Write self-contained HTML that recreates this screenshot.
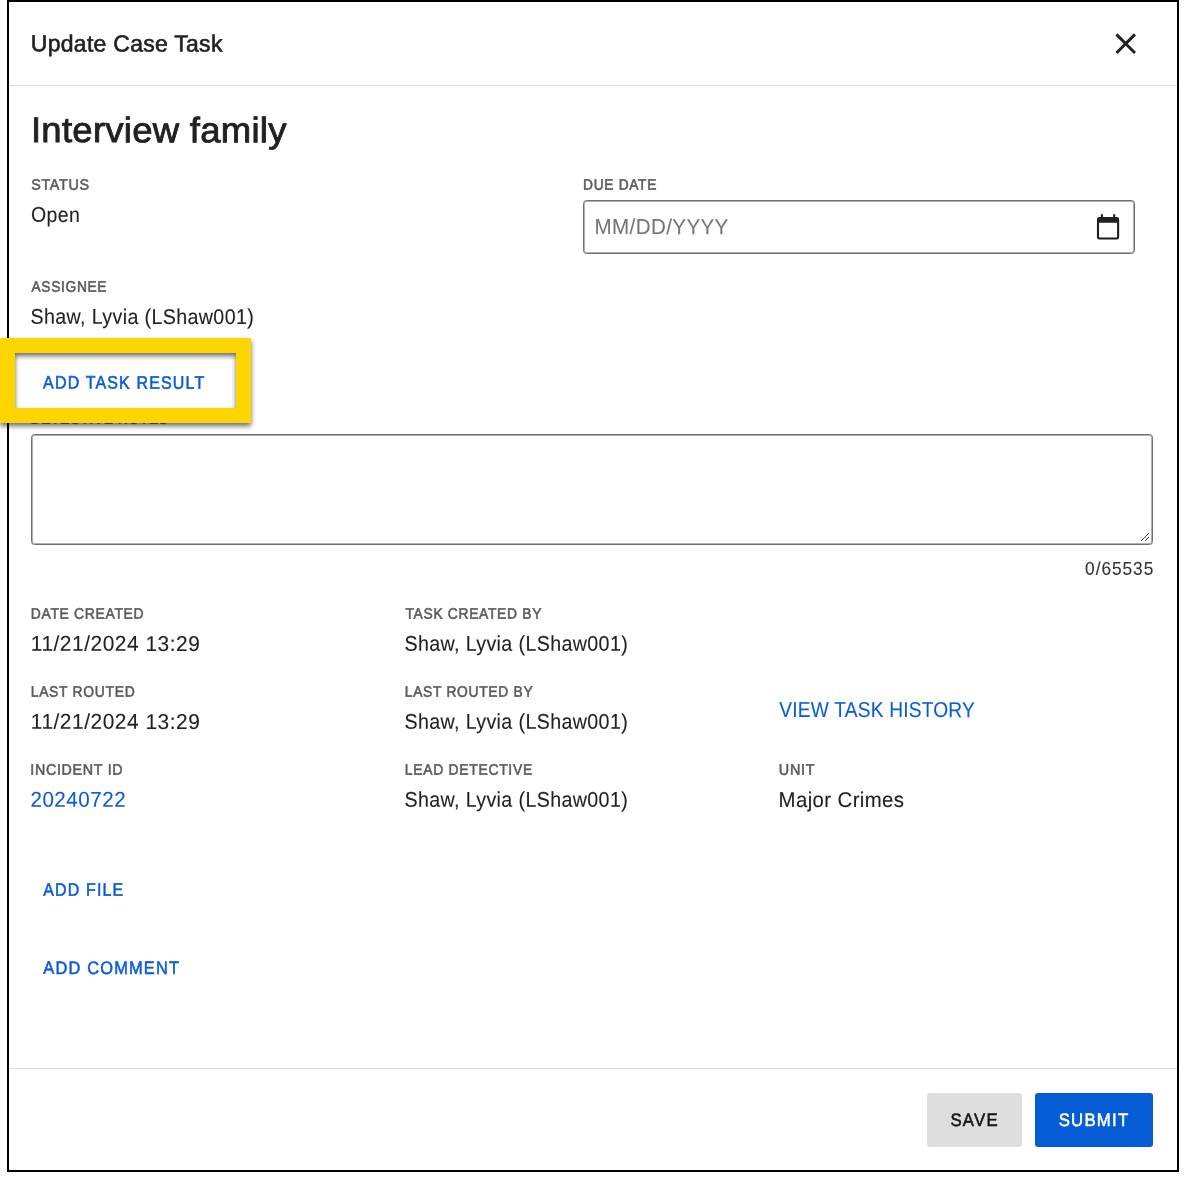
<!DOCTYPE html>
<html lang="en">
<head>
<meta charset="utf-8">
<title>Update Case Task</title>
<style>
*{box-sizing:border-box;margin:0;padding:0}
html,body{width:1191px;height:1192px;background:#fff;overflow:hidden}
body{position:relative;font-family:"Liberation Sans",sans-serif}
.t{position:absolute;left:0;top:0;white-space:nowrap;line-height:0;display:block;font-weight:400;font-style:normal;text-decoration:none;transform-origin:0 0;text-rendering:geometricPrecision}
.abs{position:absolute}
#frame{left:7px;top:0;width:1172px;height:1172px;border:2px solid #000;background:#fff}
.hr{left:9px;width:1168px;height:1px;background:#dcdcdc}
#due{left:583px;top:200px;width:552px;height:54px;border:1px solid #707070;border-radius:3.5px;background:#fff;box-shadow:inset 0 0 0 1px rgba(112,112,112,.55)}
#notes{left:31px;top:434px;width:1122px;height:111px;border:1px solid #707070;border-radius:3.5px;background:#fff;box-shadow:inset 0 0 0 1px rgba(112,112,112,.55)}
#save{left:927px;top:1093px;width:95px;height:54px;border-radius:3px;background:#dedede}
#submit{left:1035px;top:1093px;width:118px;height:54px;border-radius:3px;background:#055cd5}
#hl{left:0;top:338px;width:251px;height:84.5px;border:15px solid #ffd500;filter:drop-shadow(0.5px 3px 2.5px rgba(0,0,0,.58))}
svg{position:absolute;display:block}
#txt{position:absolute;left:0;top:0;width:1191px;height:1192px;will-change:opacity}
#t_title{font-size:24.271px;letter-spacing:0.312px;color:#212121;-webkit-text-stroke:0.625px #212121;transform:translate(30.85px,44.64px) rotate(0.05deg) scale(0.9457,0.96)}
#t_head{font-size:36.875px;letter-spacing:0.281px;color:#212121;-webkit-text-stroke:0.885px #212121;transform:translate(30.94px,130.54px) rotate(0.05deg) scale(0.9897,0.96)}
#l_status{font-size:15.833px;letter-spacing:0.781px;color:#5a5a5a;-webkit-text-stroke:0.573px #5a5a5a;transform:translate(31.15px,185.94px) rotate(0.05deg) scale(0.9072,0.96)}
#v_status{font-size:22.188px;letter-spacing:0.417px;color:#212121;-webkit-text-stroke:0.104px #212121;transform:translate(31.02px,215.15px) rotate(0.05deg) scale(0.8781,0.96)}
#l_due{font-size:15.833px;letter-spacing:0.781px;color:#5a5a5a;-webkit-text-stroke:0.573px #5a5a5a;transform:translate(583.12px,185.89px) rotate(0.05deg) scale(0.8688,0.96)}
#v_due{font-size:22.708px;letter-spacing:0.417px;color:#757575;-webkit-text-stroke:0.104px #757575;transform:translate(594.60px,226.39px) rotate(0.05deg) scale(0.9068,0.96)}
#l_assignee{font-size:15.833px;letter-spacing:0.781px;color:#5a5a5a;-webkit-text-stroke:0.573px #5a5a5a;transform:translate(31.50px,287.94px) rotate(0.05deg) scale(0.8680,0.96)}
#v_assignee{font-size:22.188px;letter-spacing:0.417px;color:#212121;-webkit-text-stroke:0.104px #212121;transform:translate(30.55px,317.08px) rotate(0.05deg) scale(0.8859,0.96)}
#l_notes{font-size:15.833px;letter-spacing:0.781px;color:#5a5a5a;-webkit-text-stroke:0.573px #5a5a5a;transform:translate(30.82px,419.85px) rotate(0.05deg) scale(0.8633,0.96)}
#b_result{font-size:18.750px;letter-spacing:1.354px;color:#0b5cd5;-webkit-text-stroke:0.573px #0b5cd5;transform:translate(43.11px,382.80px) rotate(0.05deg) scale(0.8531,0.96)}
#v_count{font-size:19.167px;letter-spacing:1.042px;color:#333333;-webkit-text-stroke:0.104px #333333;transform:translate(1085.09px,569.89px) rotate(0.05deg) scale(0.9028,0.96)}
#l_created{font-size:15.833px;letter-spacing:0.781px;color:#5a5a5a;-webkit-text-stroke:0.573px #5a5a5a;transform:translate(30.74px,614.87px) rotate(0.05deg) scale(0.8783,0.96)}
#v_created{font-size:22.396px;letter-spacing:0.573px;color:#212121;-webkit-text-stroke:0.104px #212121;transform:translate(30.79px,644.06px) rotate(0.05deg) scale(0.9334,0.96)}
#l_routed{font-size:15.833px;letter-spacing:0.781px;color:#5a5a5a;-webkit-text-stroke:0.573px #5a5a5a;transform:translate(30.73px,692.88px) rotate(0.05deg) scale(0.8786,0.96)}
#v_routed{font-size:22.396px;letter-spacing:0.573px;color:#212121;-webkit-text-stroke:0.104px #212121;transform:translate(30.79px,722.06px) rotate(0.05deg) scale(0.9334,0.96)}
#l_incident{font-size:15.833px;letter-spacing:0.781px;color:#5a5a5a;-webkit-text-stroke:0.573px #5a5a5a;transform:translate(30.22px,770.89px) rotate(0.05deg) scale(0.9017,0.96)}
#v_incident{font-size:22.396px;letter-spacing:0.573px;color:#0b5cd5;-webkit-text-stroke:0.104px #0b5cd5;transform:translate(30.42px,800.04px) rotate(0.05deg) scale(0.9201,0.96)}
#l_createdby{font-size:15.833px;letter-spacing:0.781px;color:#5a5a5a;-webkit-text-stroke:0.573px #5a5a5a;transform:translate(405.48px,614.90px) rotate(0.05deg) scale(0.8741,0.96)}
#v_createdby{font-size:22.188px;letter-spacing:0.417px;color:#212121;-webkit-text-stroke:0.104px #212121;transform:translate(404.46px,643.97px) rotate(0.05deg) scale(0.8862,0.96)}
#l_routedby{font-size:15.833px;letter-spacing:0.781px;color:#5a5a5a;-webkit-text-stroke:0.573px #5a5a5a;transform:translate(404.84px,692.89px) rotate(0.05deg) scale(0.8741,0.96)}
#v_routedby{font-size:22.188px;letter-spacing:0.417px;color:#212121;-webkit-text-stroke:0.104px #212121;transform:translate(404.46px,721.97px) rotate(0.05deg) scale(0.8862,0.96)}
#l_lead{font-size:15.833px;letter-spacing:0.781px;color:#5a5a5a;-webkit-text-stroke:0.573px #5a5a5a;transform:translate(404.79px,770.88px) rotate(0.05deg) scale(0.8802,0.96)}
#v_lead{font-size:22.188px;letter-spacing:0.417px;color:#212121;-webkit-text-stroke:0.104px #212121;transform:translate(404.46px,799.97px) rotate(0.05deg) scale(0.8862,0.96)}
#b_history{font-size:22.500px;letter-spacing:0.208px;color:#0b5cd5;-webkit-text-stroke:0.104px #0b5cd5;transform:translate(779.33px,710.26px) rotate(0.05deg) scale(0.8530,0.96)}
#l_unit{font-size:15.833px;letter-spacing:0.781px;color:#5a5a5a;-webkit-text-stroke:0.573px #5a5a5a;transform:translate(778.80px,770.98px) rotate(0.05deg) scale(0.9085,0.96)}
#v_unit{font-size:22.188px;letter-spacing:0.417px;color:#212121;-webkit-text-stroke:0.104px #212121;transform:translate(778.60px,800.19px) rotate(0.05deg) scale(0.9193,0.96)}
#b_file{font-size:18.750px;letter-spacing:1.354px;color:#0b5cd5;-webkit-text-stroke:0.573px #0b5cd5;transform:translate(43.32px,889.99px) rotate(0.05deg) scale(0.8517,0.96)}
#b_comment{font-size:18.750px;letter-spacing:1.354px;color:#0b5cd5;-webkit-text-stroke:0.573px #0b5cd5;transform:translate(43.26px,968.11px) rotate(0.05deg) scale(0.8748,0.96)}
#b_save{font-size:18.750px;letter-spacing:1.354px;color:#161616;-webkit-text-stroke:0.573px #161616;transform:translate(950.44px,1120.29px) rotate(0.05deg) scale(0.8945,0.96)}
#b_submit{font-size:18.750px;letter-spacing:1.354px;color:#ffffff;-webkit-text-stroke:0.573px #ffffff;transform:translate(1058.69px,1120.28px) rotate(0.05deg) scale(0.8949,0.96)}
</style>
</head>
<body>
<div class="abs" id="frame"></div>
<div class="abs hr" style="top:85px"></div>
<div class="abs hr" style="top:1068px"></div>
<div class="abs" id="due"></div>
<div class="abs" id="notes"></div>
<div class="abs" id="save"></div>
<div class="abs" id="submit"></div>
<svg id="ic_close" style="left:1108.2px;top:26.15px" width="35.4" height="35.4" viewBox="0 0 24 24"><path fill="#212121" d="M19 6.41L17.59 5 12 10.59 6.41 5 5 6.41 10.59 12 5 17.59 6.41 19 12 13.41 17.59 19 19 17.59 13.41 12z"/></svg>
<svg id="ic_cal" style="left:1090px;top:208px" width="36" height="36" viewBox="1090 208 36 36"><path fill="#1f1f1f" fill-rule="evenodd" d="M1099.35 217.07h17.42a2.4 2.4 0 0 1 2.4 2.4v17.73a2.4 2.4 0 0 1 -2.4 2.4h-17.42a2.4 2.4 0 0 1 -2.4 -2.4v-17.73a2.4 2.4 0 0 1 2.4 -2.4zM1099.05 222.8v14.3a0.3 0.3 0 0 0 0.3 0.3h17.42a0.3 0.3 0 0 0 0.3 -0.3v-14.3z"/><path fill="#1f1f1f" d="M1100.9 214.3h2.1v3.4h-2.1zM1113.1 214.3h2.1v3.4h-2.1z"/></svg>
<svg id="ic_grip" style="left:1138px;top:530px" width="14" height="14" viewBox="1138 530 14 14"><path d="M1141 541L1149 533M1145 541L1149 537" stroke="#444" stroke-width="1" fill="none"/></svg>
<div id="txt">
<h2 class="t" id="t_title">Update Case Task</h2>
<h1 class="t" id="t_head">Interview family</h1>
<label class="t" id="l_status">STATUS</label>
<div class="t" id="v_status">Open</div>
<label class="t" id="l_due">DUE DATE</label>
<div class="t" id="v_due">MM/DD/YYYY</div>
<label class="t" id="l_assignee">ASSIGNEE</label>
<div class="t" id="v_assignee">Shaw, Lyvia (LShaw001)</div>
<label class="t" id="l_notes">DETECTIVE NOTES</label>
<span class="t" id="b_result">ADD TASK RESULT</span>
<div class="t" id="v_count">0/65535</div>
<label class="t" id="l_created">DATE CREATED</label>
<div class="t" id="v_created">11/21/2024 13:29</div>
<label class="t" id="l_routed">LAST ROUTED</label>
<div class="t" id="v_routed">11/21/2024 13:29</div>
<label class="t" id="l_incident">INCIDENT ID</label>
<a class="t" id="v_incident">20240722</a>
<label class="t" id="l_createdby">TASK CREATED BY</label>
<div class="t" id="v_createdby">Shaw, Lyvia (LShaw001)</div>
<label class="t" id="l_routedby">LAST ROUTED BY</label>
<div class="t" id="v_routedby">Shaw, Lyvia (LShaw001)</div>
<label class="t" id="l_lead">LEAD DETECTIVE</label>
<div class="t" id="v_lead">Shaw, Lyvia (LShaw001)</div>
<a class="t" id="b_history">VIEW TASK HISTORY</a>
<label class="t" id="l_unit">UNIT</label>
<div class="t" id="v_unit">Major Crimes</div>
<span class="t" id="b_file">ADD FILE</span>
<span class="t" id="b_comment">ADD COMMENT</span>
<span class="t" id="b_save">SAVE</span>
<span class="t" id="b_submit">SUBMIT</span>
</div>
<div class="abs" id="hl"></div>
</body>
</html>
